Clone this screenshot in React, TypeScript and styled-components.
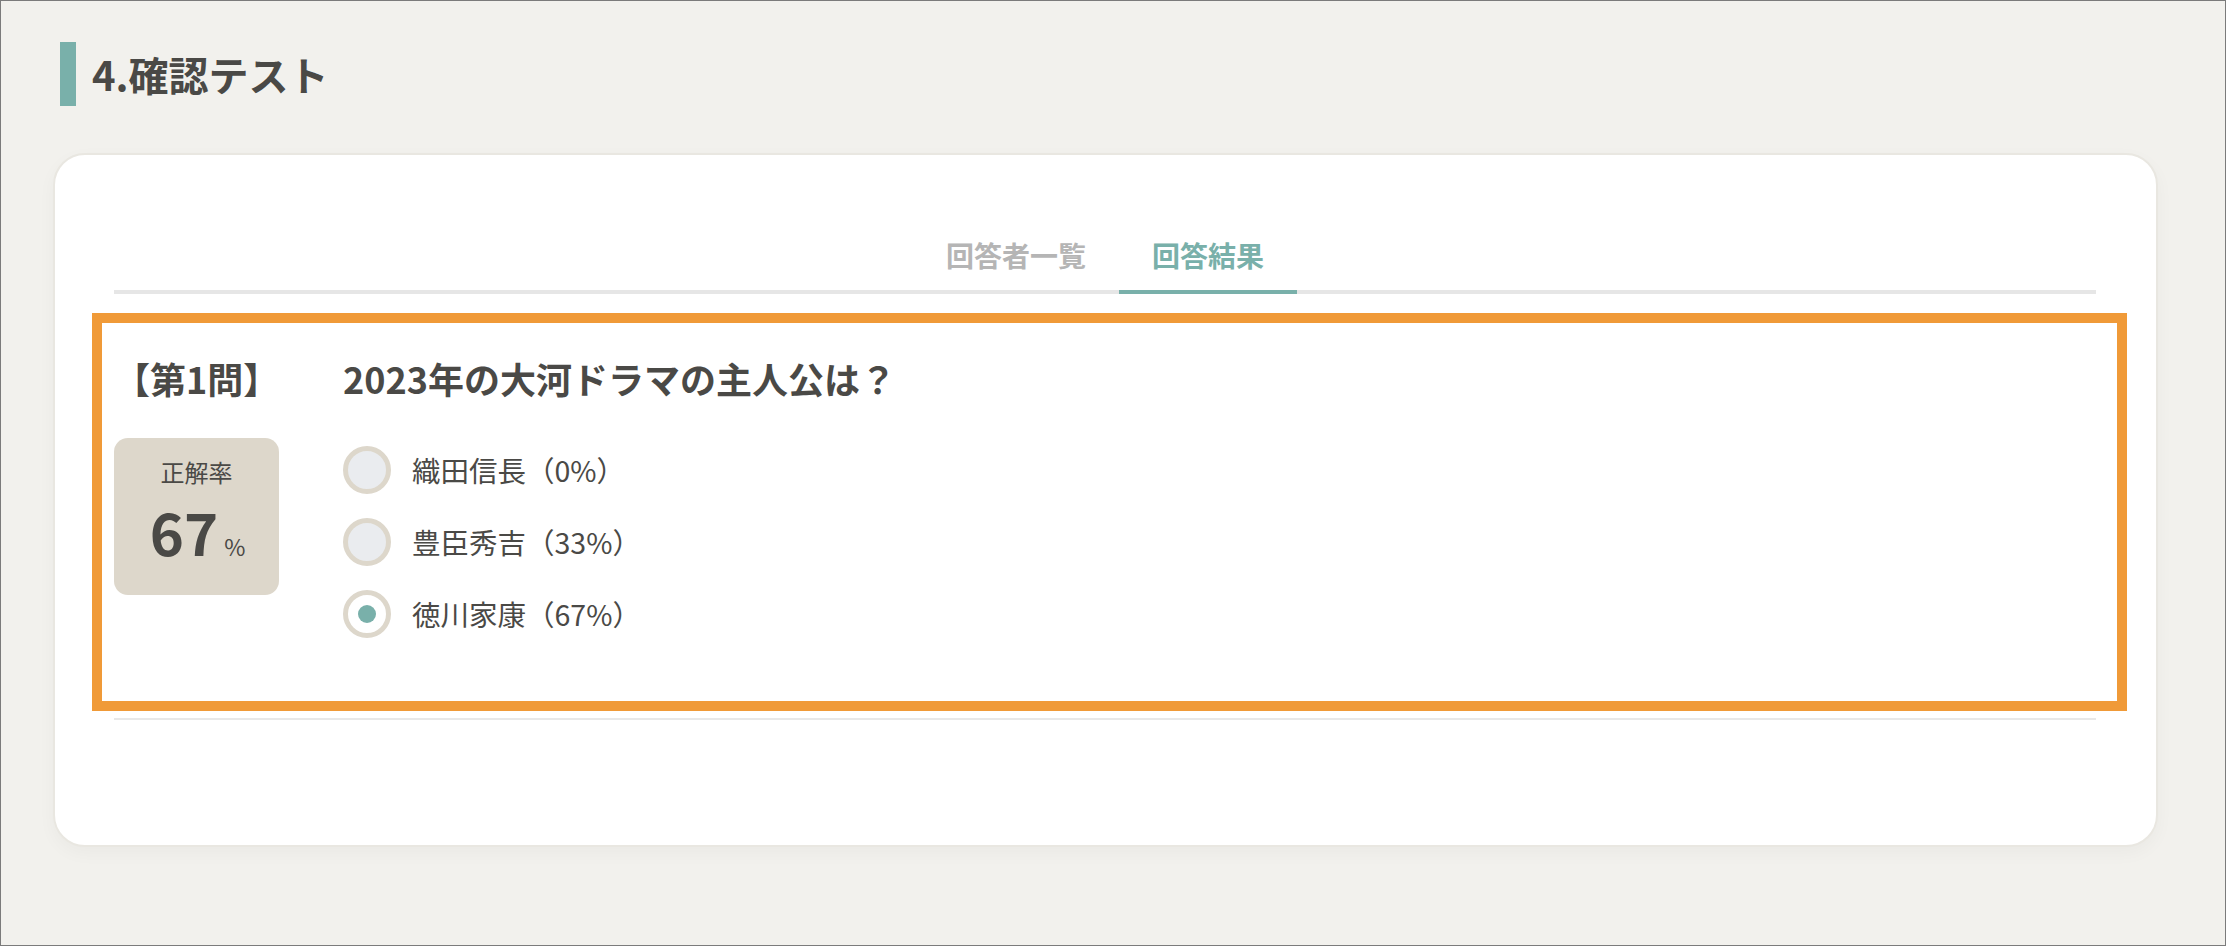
import React from "react";
import styled, { createGlobalStyle } from "styled-components";

const GlobalStyle = createGlobalStyle`
  html, body {
    margin: 0;
    padding: 0;
    background: #f2f1ed;
  }
  * { box-sizing: border-box; }
  body {
    font-family: "Noto Sans CJK JP", "Noto Sans", sans-serif;
    color: #4a4946;
  }
`;

const Page = styled.div`
  height: 100vh;
  border: 1px solid #7b7b7b;
  background: #f2f1ed;
  padding: 41px 67px 0 52px;
`;

const SectionHeading = styled.div`
  display: flex;
  align-items: center;
  gap: 16px;
  margin-left: 7px;
`;

const HeadingBar = styled.span`
  width: 16px;
  height: 64px;
  background: #79b0aa;
`;

const HeadingText = styled.h2`
  margin: 0;
  font-size: 40px;
  line-height: 64px;
  font-weight: 700;
  color: #4a4946;
`;

const Card = styled.section`
  margin-top: 47px;
  background: #ffffff;
  border: 2px solid #e9e7e1;
  border-radius: 32px;
  box-shadow: 0 6px 18px rgba(0, 0, 0, 0.035);
  padding: 79px 60px 125px 59px;
`;

const TabBar = styled.nav`
  display: flex;
  justify-content: center;
  border-bottom: 4px solid #e6e6e6;
`;

const Tab = styled.div<{ $active?: boolean }>`
  padding: 0 33px 14px;
  margin-bottom: -4px;
  border-bottom: 4px solid ${(p) => (p.$active ? "#79b0aa" : "transparent")};
  font-size: 28px;
  line-height: 42px;
  font-weight: 700;
  color: ${(p) => (p.$active ? "#79b0aa" : "#b5b5b5")};
`;

const Highlight = styled.div`
  margin: 19px -31px 0 -22px;
  border: 10px solid #f09a38;
  padding: 28px 21px 63px 12px;
`;

const Question = styled.div`
  display: grid;
  grid-template-columns: 165px 1fr;
  column-gap: 64px;
  align-items: start;
`;

const LeftColumn = styled.div`
  display: flex;
  flex-direction: column;
`;

const QuestionNo = styled.div`
  font-size: 36px;
  line-height: 54px;
  font-weight: 700;
  color: #4a4946;
`;

const ScoreBox = styled.div`
  margin-top: 33px;
  height: 157px;
  background: #ddd7cb;
  border-radius: 14px;
  display: flex;
  flex-direction: column;
  align-items: center;
  padding-top: 16px;
`;

const ScoreLabel = styled.div`
  font-size: 24px;
  line-height: 36px;
  color: #4a4946;
`;

const ScoreValue = styled.div`
  margin-top: 12px;
  margin-left: 2px;
  display: flex;
  align-items: baseline;
  font-size: 58px;
  line-height: 58px;
  font-weight: 700;
  color: #4a4946;
`;

const ScoreUnit = styled.span`
  font-size: 23px;
  font-weight: 400;
  margin-left: 6px;
`;

const RightColumn = styled.div`
  display: flex;
  flex-direction: column;
`;

const QuestionTitle = styled.div`
  font-size: 36px;
  line-height: 54px;
  font-weight: 700;
  color: #4a4946;
`;

const OptionList = styled.ul`
  list-style: none;
  margin: 41px 0 0;
  padding: 0;
  display: flex;
  flex-direction: column;
  gap: 24px;
`;

const OptionRow = styled.li`
  display: flex;
  align-items: center;
  gap: 21px;
  height: 48px;
`;

const Radio = styled.span<{ $checked?: boolean }>`
  width: 48px;
  height: 48px;
  border-radius: 50%;
  border: 5px solid #ddd7cb;
  background: ${(p) => (p.$checked ? "#ffffff" : "#eaecef")};
  display: flex;
  align-items: center;
  justify-content: center;
  flex-shrink: 0;
`;

const RadioDot = styled.span`
  width: 18px;
  height: 18px;
  border-radius: 50%;
  background: #79b0aa;
`;

const OptionText = styled.span`
  font-size: 28.5px;
  line-height: 42px;
  color: #4a4946;
`;

const Divider = styled.div`
  margin-top: 7px;
  height: 2px;
  background: #e8e8e8;
`;

const options = [
  { label: "織田信長（0%）", checked: false },
  { label: "豊臣秀吉（33%）", checked: false },
  { label: "徳川家康（67%）", checked: true },
];

export default function App() {
  return (
    <>
      <GlobalStyle />
      <Page>
        <SectionHeading>
          <HeadingBar />
          <HeadingText>4.確認テスト</HeadingText>
        </SectionHeading>
        <Card>
          <TabBar>
            <Tab>回答者一覧</Tab>
            <Tab $active>回答結果</Tab>
          </TabBar>
          <Highlight>
            <Question>
              <LeftColumn>
                <QuestionNo>【第1問】</QuestionNo>
                <ScoreBox>
                  <ScoreLabel>正解率</ScoreLabel>
                  <ScoreValue>
                    67<ScoreUnit>%</ScoreUnit>
                  </ScoreValue>
                </ScoreBox>
              </LeftColumn>
              <RightColumn>
                <QuestionTitle>2023年の大河ドラマの主人公は？</QuestionTitle>
                <OptionList>
                  {options.map((o) => (
                    <OptionRow key={o.label}>
                      <Radio $checked={o.checked}>{o.checked && <RadioDot />}</Radio>
                      <OptionText>{o.label}</OptionText>
                    </OptionRow>
                  ))}
                </OptionList>
              </RightColumn>
            </Question>
          </Highlight>
          <Divider />
        </Card>
      </Page>
    </>
  );
}
